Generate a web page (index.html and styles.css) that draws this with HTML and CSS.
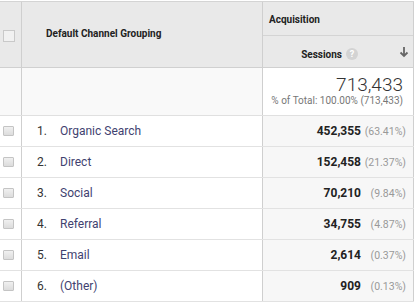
FILE: index.html
```html
<!DOCTYPE html>
<html>
<head>
<meta charset="utf-8">
<link rel="stylesheet" href="styles.css">
</head>
<body>
<div class="report">
  <div class="head">
    <div class="cell chk-cell head-chk"><span class="box"></span></div>
    <div class="cell dim-head">Default Channel Grouping</div>
    <div class="cell metric-head">
      <div class="group-title">Acquisition</div>
      <div class="metric-title">
        <span class="metric-name">Sessions</span>
        <span class="help">?</span>
        <svg class="sort" width="10" height="12" viewBox="0 0 10 12"><path d="M5 1v9M1.5 6.5 5 10l3.5-3.5" fill="none" stroke="#666" stroke-width="1.8"/></svg>
      </div>
    </div>
  </div>
  <div class="total">
    <div class="cell chk-cell"></div>
    <div class="cell"></div>
    <div class="cell total-cell">
      <div class="total-num">713,433</div>
      <div class="total-sub">% of Total: 100.00% (713,433)</div>
    </div>
  </div>
  <div class="row">
    <div class="cell chk-cell"><span class="box small"></span></div>
    <div class="cell dim"><span class="idx">1.</span><span class="label">Organic Search</span></div>
    <div class="cell val"><b>452,355</b><span class="pct">(63.41%)</span></div>
  </div>
  <div class="row">
    <div class="cell chk-cell"><span class="box small"></span></div>
    <div class="cell dim"><span class="idx">2.</span><span class="label">Direct</span></div>
    <div class="cell val"><b>152,458</b><span class="pct">(21.37%)</span></div>
  </div>
  <div class="row">
    <div class="cell chk-cell"><span class="box small"></span></div>
    <div class="cell dim"><span class="idx">3.</span><span class="label">Social</span></div>
    <div class="cell val"><b>70,210</b><span class="pct">(9.84%)</span></div>
  </div>
  <div class="row">
    <div class="cell chk-cell"><span class="box small"></span></div>
    <div class="cell dim"><span class="idx">4.</span><span class="label">Referral</span></div>
    <div class="cell val"><b>34,755</b><span class="pct">(4.87%)</span></div>
  </div>
  <div class="row">
    <div class="cell chk-cell"><span class="box small"></span></div>
    <div class="cell dim"><span class="idx">5.</span><span class="label">Email</span></div>
    <div class="cell val"><b>2,614</b><span class="pct">(0.37%)</span></div>
  </div>
  <div class="row">
    <div class="cell chk-cell"><span class="box small"></span></div>
    <div class="cell dim"><span class="idx">6.</span><span class="label">(Other)</span></div>
    <div class="cell val"><b>909</b><span class="pct">(0.13%)</span></div>
  </div>
</div>
</body>
</html>
```
FILE: styles.css
```css
* { box-sizing: border-box; }
html, body { margin: 0; padding: 0; background: #fff; }
body { font-family: Roboto, "Liberation Sans", Arial, sans-serif; color: #222; }

.report {
  width: 414px;
  margin-top: 1px;
  border-top: 1px solid #d4d4d4;
}

.head, .total, .row {
  display: grid;
  grid-template-columns: 22px 241px 151px;
}

.cell {
  border-right: 1px solid #cfcfcf;
}

.head {
  background: #e9e9e9;
  height: 66px;
  border-bottom: 1px solid #d0d0d0;
}

.chk-cell {
  display: flex;
  align-items: center;
  padding-left: 3px;
}

.box {
  display: block;
  width: 12px;
  height: 12px;
  border: 1px solid #c9c9c9;
  background: #f1f1f1;
}
.box.small {
  width: 11px;
  height: 10px;
  border: 1px solid #c4c4c4;
  background: linear-gradient(#f0f0f0, #dcdcdc);
  border-radius: 1px;
}

.head-chk { padding-top: 2px; }

.dim-head {
  display: flex;
  align-items: center;
  padding-left: 24px;
  padding-bottom: 2px;
  font-size: 10px;
  font-weight: 700;
  color: #222;
}

.metric-head {
  display: flex;
  flex-direction: column;
}
.group-title {
  height: 34px;
  border-bottom: 1px solid #d4d4d4;
  display: flex;
  align-items: center;
  padding-left: 6px;
  font-size: 10px;
  font-weight: 700;
  padding-top: 2px;
}
.metric-title {
  flex: 1;
  display: flex;
  align-items: center;
  justify-content: flex-end;
  padding-right: 4px;
  padding-top: 5px;
  font-size: 10px;
  font-weight: 700;
}
.metric-name { margin-right: 4px; }
.help {
  width: 12px;
  height: 12px;
  border-radius: 50%;
  background: #d3d3d3;
  color: #fff;
  font-size: 9px;
  font-weight: 700;
  display: flex;
  align-items: center;
  justify-content: center;
  margin-right: 41px;
}
.sort { display: block; margin-top: -4px; }

.total {
  height: 48px;
  background: #f9f9f9;
  border-bottom: 1px solid #e0e0e0;
}
.total-cell {
  background: #fff;
  text-align: right;
  padding-right: 10px;
  padding-top: 7px;
}
.total-num {
  font-size: 19px;
  font-weight: 300;
  color: #333;
  line-height: 20px;
}
.total-sub {
  font-size: 10px;
  color: #777;
  line-height: 12px;
}

.row {
  height: 31px;
  border-bottom: 1px solid #e2e2e2;
}
.dim {
  display: flex;
  align-items: center;
  font-size: 12px;
  padding-left: 15px;
}
.idx { width: 23px; color: #333; }
.label { color: #3f4270; }

.val {
  background: #f7f7f7;
  display: flex;
  align-items: center;
  justify-content: flex-end;
  padding-right: 7px;
}
.val b {
  font-size: 12px;
  font-weight: 700;
  color: #222;
}
.pct {
  width: 45px;
  text-align: right;
  font-size: 10.5px;
  color: #999;
}
```
